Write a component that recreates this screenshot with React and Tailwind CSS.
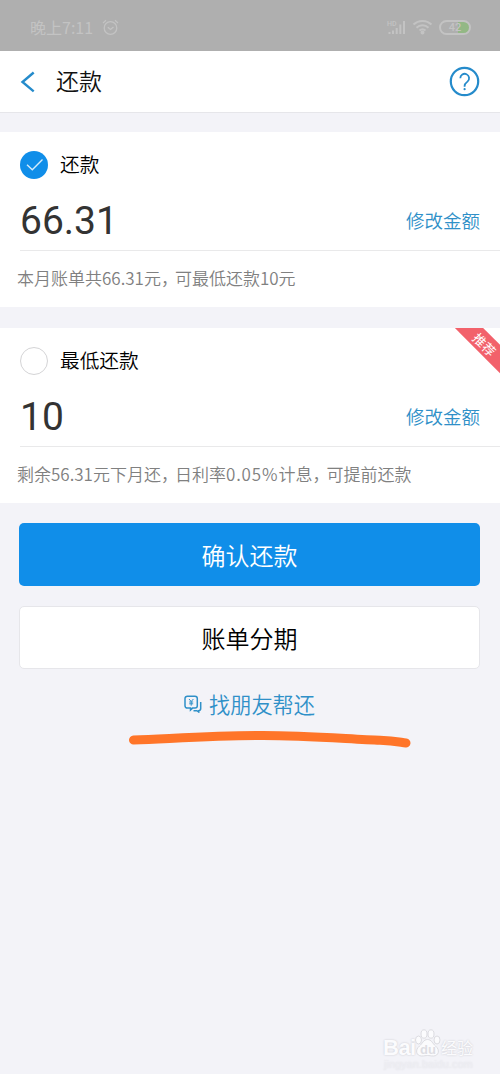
import React, { useState } from "react";

const plans = [
  {
    id: "full",
    title: "还款",
    amount: "66.31",
    note: ["本月账单共66.31元", "可最低还款10元"],
  },
  {
    id: "minimum",
    title: "最低还款",
    amount: "10",
    note: ["剩余56.31元下月还", "日利率0.05%计息", "可提前还款"],
    recommended: true,
  },
];

const StatusBar = () => (
  <div className="flex h-[51px] items-center justify-between bg-[#afafaf] pl-[30px] pr-[29px] pt-[3px] text-[#c3c3c3]">
    <div className="flex items-center gap-[9px]">
      <span className="text-[16px] font-normal leading-none">晚上7:11</span>
      <svg width="17" height="17" viewBox="0 0 17 17" fill="none" stroke="currentColor" strokeWidth="1.3">
        <circle cx="8.5" cy="9" r="6.3" />
        <path d="M5.8 8.2l2.7 2.3 3-2.6M1 4l3-2.7M16 4l-3-2.7" />
      </svg>
    </div>
    <div className="flex items-center">
      <svg width="21" height="18" viewBox="0 0 21 18" stroke="currentColor" fill="none">
        <path strokeWidth="2" d="M3.5 14v2M7 12.500V16M10.700 10v6M14.300 6.500V16M18 3v13" />
        <text x="1" y="8" fontSize="7" fontFamily="Roboto" fontWeight="500" fill="currentColor" stroke="none">HD</text>
      </svg>
      <svg className="ml-[5px]" width="21" height="16" viewBox="0 0 21 16" fill="none" stroke="currentColor" strokeWidth="2">
        <path d="M1.500 5.500a13 13 0 0 1 18 0M4.500 8.700a8.600 8.600 0 0 1 12 0M7.500 11.600a4.500 4.500 0 0 1 6 0" />
        <circle cx="10.500" cy="13.500" r="1" fill="currentColor" />
      </svg>
      <div className="ml-[6px] flex h-[15px] w-[32px] items-center justify-center rounded-full border-2 border-[#c3c3c3] bg-[linear-gradient(90deg,#afafaf_62%,#93b885_62%)] font-[Roboto] text-[11px] font-medium leading-none">
        42
      </div>
    </div>
  </div>
);

const Header = () => (
  <div className="flex h-[62px] items-center border-b border-[#e6e6ea] bg-white pl-[20px] pr-[20px]">
    <svg width="16" height="22" viewBox="0 0 16 22" fill="none" stroke="#258bcb" strokeWidth="2.4">
      <path d="M13.700 1.500L2.500 11l11.200 9.300" />
    </svg>
    <h1 className="ml-[20px] flex-1 pb-[2px] text-[23px] font-[350] leading-none text-[#111]">还款</h1>
    <svg width="31" height="31" viewBox="0 0 31 31" fill="none" stroke="#258bcb">
      <circle cx="15.500" cy="15.500" r="13.700" strokeWidth="2.200" />
      <path strokeWidth="1.800" d="M11.300 12.300a4.400 4.400 0 1 1 7.200 3.300c-1.700 1.300-2.900 2-2.900 4.400v.800" />
      <circle cx="15.600" cy="23.200" r="1.100" fill="#258bcb" stroke="none" />
    </svg>
  </div>
);

const Radio = ({ checked }) =>
  checked ? (
    <svg width="28" height="28" viewBox="0 0 28 28">
      <circle cx="14" cy="14" r="14" fill="#108ee9" />
      <path d="M7 13.700l5.300 5L22.500 8.500" fill="none" stroke="#d5ecfb" strokeWidth="1.400" />
    </svg>
  ) : (
    <span className="block size-[28px] rounded-full border border-[#d4d4d6] bg-white" />
  );

// the percent figure is set a little wider than the rest of the line
const NotePart = ({ text }) =>
  text.split(/([\d.]+%)/).map((piece) =>
    piece.endsWith("%") ? (
      <span key={piece} className="tracking-[0.9px]">{piece}</span>
    ) : (
      piece
    )
  );

const PlanCard = ({ plan, checked, onSelect }) => (
  <section className="relative h-[175px] overflow-hidden bg-white pt-[19px]">
    <button className="flex h-[28px] items-center pl-[20px]" onClick={onSelect}>
      <Radio checked={checked} />
      <span className="ml-[12px] pb-[2px] text-[19.700px] leading-none text-black">{plan.title}</span>
    </button>
    <div className="ml-[20px] mt-[14px] flex h-[58px] items-center justify-between border-b border-[#e9e9ea] pr-[20px]">
      <span className="pb-px font-[Roboto] text-[39px] font-normal leading-none text-[#333]">{plan.amount}</span>
      <button className="pb-[2px] text-[18.500px] leading-none text-[#2f90c8]">修改金额</button>
    </div>
    <p className="flex h-[55px] items-center whitespace-nowrap pb-[2px] pl-[17px] text-[17px] leading-none text-[#808080]">
      {plan.note.map((part, index) => (
        <span key={part}>
          <NotePart text={part} />
          {index < plan.note.length - 1 && (
            <span className="mr-[5.500px] [font-feature-settings:'halt']">，</span>
          )}
        </span>
      ))}
    </p>
    {plan.recommended && (
      <div className="absolute -right-[35px] top-[6px] flex h-[20px] w-[100px] rotate-45 items-center justify-center bg-[#f2616b] text-[13px] font-normal leading-none text-white">
        推荐
      </div>
    )}
  </section>
);

const App = () => {
  const [selected, setSelected] = useState("full");

  return (
    <div className="relative h-[1074px] w-[500px] overflow-hidden bg-[#f3f3f8] font-['Noto_Sans_CJK_SC',sans-serif] font-[350]">
      <StatusBar />
      <Header />

      <div className="mt-[19px] flex flex-col gap-[21px]">
        {plans.map((plan) => (
          <PlanCard
            key={plan.id}
            plan={plan}
            checked={selected === plan.id}
            onSelect={() => setSelected(plan.id)}
          />
        ))}
      </div>

      <div className="mt-[20px] flex flex-col items-center pl-[19px] pr-[20px]">
        <button className="h-[63px] w-full rounded-[5px] bg-[#108ee9] text-[24px] leading-none text-white">
          确认还款
        </button>
        <button className="mt-[20px] h-[63px] w-full rounded-[5px] border border-[#e6e6ea] bg-white text-[24px] leading-none text-black">
          账单分期
        </button>
        <button className="mt-[22px] flex h-[26px] items-center text-[21.200px] leading-none text-[#2f90c8]">
          <svg className="mr-[7px]" width="18" height="18" viewBox="0 0 18 18" fill="none" stroke="currentColor" strokeWidth="1.500">
            <path d="M3.300 1.200h7.700a2.300 2.300 0 0 1 2.300 2.300v7.300a2.300 2.300 0 0 1-2.300 2.300H8.500L6.500 15v-1.900H3.300A2.300 2.300 0 0 1 1 10.800V3.500a2.300 2.300 0 0 1 2.300-2.300z" />
            <path d="M16.700 7v6.500a2.200 2.200 0 0 1-2 2.200V17l-1.800-1.300H9.500" />
            <path strokeWidth="1" d="M5 4l2.200 2.500L9.400 4M7.200 6.500v4.200M5.200 7h4M5.200 8.800h4" />
          </svg>
          <span className="pb-px">找朋友帮还</span>
        </button>
        <svg className="ml-[40px] mt-[12px]" width="284" height="20" viewBox="0 0 284 20" fill="none">
          <path
            d="M5.500 11C50 9.200 90 6.500 135 6.500S225 10.500 252 11.300c15 .500 20 2 26 2.700"
            stroke="#ff7529"
            strokeWidth="9"
            strokeLinecap="round"
          />
        </svg>
      </div>

      {/* watermark */}
      <div className="absolute left-[383px] top-[1028px] w-[117px] font-normal text-[#fbfbfd] [text-shadow:0_0_2px_#c4c4ca]">
        <div className="flex items-end leading-none">
          <span className="w-[31px] font-['Liberation_Sans'] text-[22px] font-bold leading-[20px] tracking-[-0.5px]">Bai</span>
          <svg width="27" height="30" viewBox="0 0 27 30" fill="#fbfbfd" stroke="#dcdce1" strokeWidth="1">
            <ellipse cx="4.500" cy="12" rx="3" ry="4" />
            <ellipse cx="10" cy="6" rx="3" ry="4.200" />
            <ellipse cx="17" cy="6" rx="3" ry="4.200" />
            <ellipse cx="23" cy="12" rx="3" ry="4" />
            <path d="M13.500 11.500c4 0 5 4 8 6.500 5 4 3 10-2 10-3 0-4-.5-6-.5s-3 .500-6 .500c-5 0-7-6-2-10 3-2.500 4-6.500 8-6.500z" />
            <text x="6" y="26" fontSize="13" fontFamily="Liberation Sans" fontWeight="700" fill="#dedee3" stroke="none" className="[text-shadow:none]">du</text>
          </svg>
          <span className="text-[16px] leading-[21px]">经验</span>
        </div>
        <div className="ml-px font-['Liberation_Sans'] text-[11px] leading-[13px] text-[#eeeef3] [text-shadow:0_0_2px_#e0e0e6]">jingyan.baidu.com</div>
      </div>
    </div>
  );
};

export default App;
